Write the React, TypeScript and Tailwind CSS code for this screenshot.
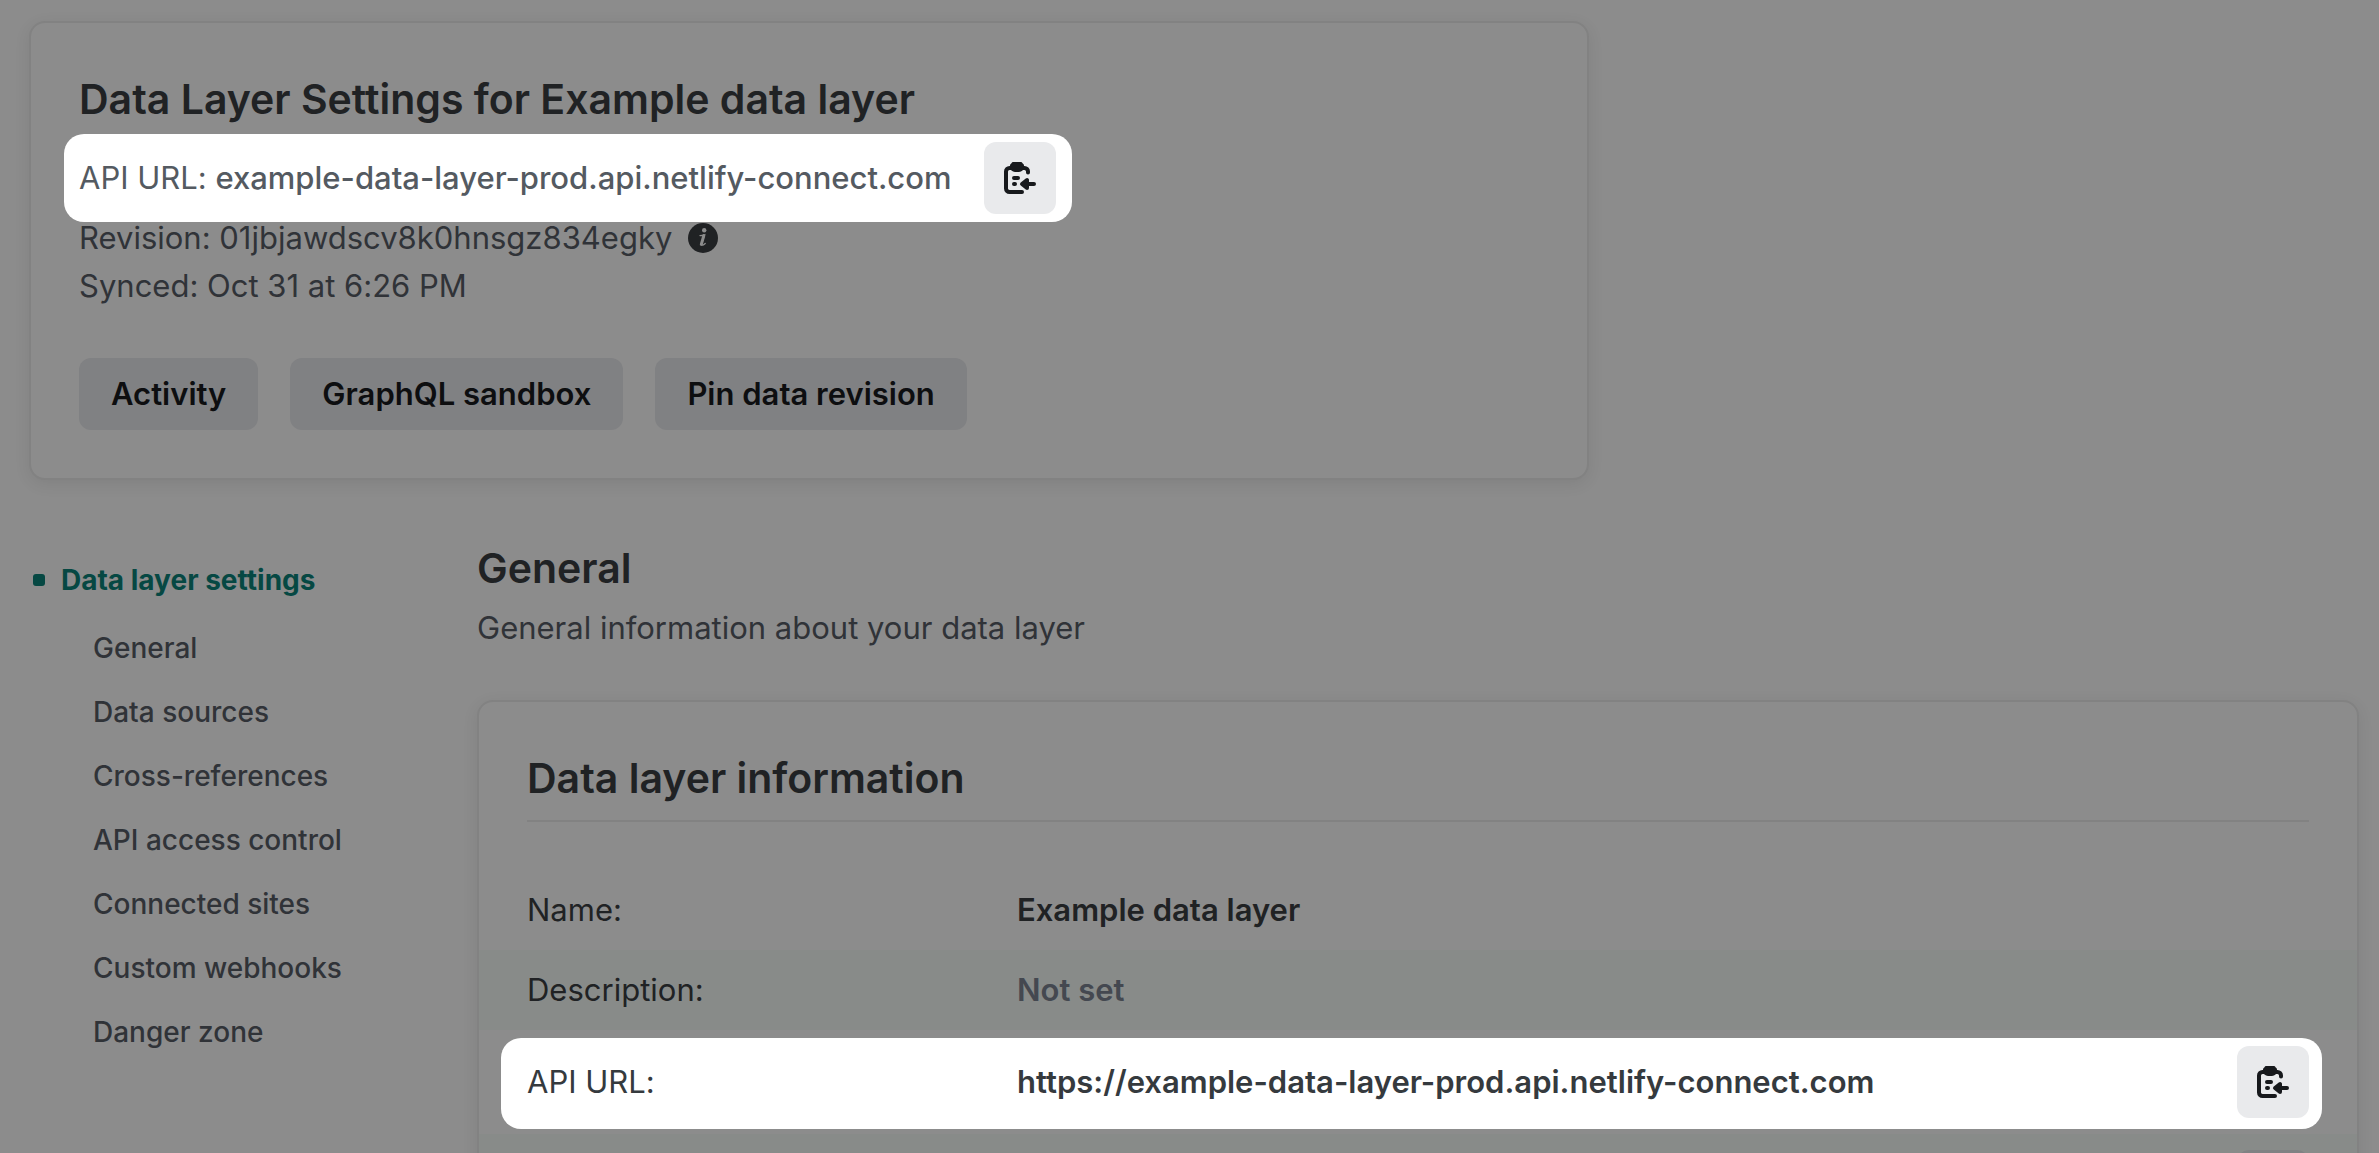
import type { ReactNode } from "react";

const navItems = [
  { label: "General", href: "#general" },
  { label: "Data sources", href: "#data-sources" },
  { label: "Cross-references", href: "#cross-references" },
  { label: "API access control", href: "#api-access-control" },
  { label: "Connected sites", href: "#connected-sites" },
  { label: "Custom webhooks", href: "#custom-webhooks" },
  { label: "Danger zone", href: "#danger-zone" },
];

const headerActions = ["Activity", "GraphQL sandbox", "Pin data revision"];

function CopyIcon() {
  return (
    <svg viewBox="0 0 32 32" className="size-8" fill="none" aria-hidden="true">
      <path
        d="M7 6H5.5A3.5 3.5 0 0 0 2 9.5v17A3.5 3.5 0 0 0 5.5 30H18M19 6h1.5A3.5 3.5 0 0 1 24 9.5V10.5"
        stroke="currentColor"
        strokeWidth="4"
        strokeLinecap="round"
      />
      <path
        d="M9.5 0h7a2 2 0 0 1 2 1.2A2.5 2.5 0 0 1 20 3.5V5a5 5 0 0 1-5 5h-4a5 5 0 0 1-5-5V3.5a2.5 2.5 0 0 1 1.5-2.3A2 2 0 0 1 9.5 0Z"
        fill="currentColor"
      />
      <path d="M10 16h4M10 22h1M23 22h7" stroke="currentColor" strokeWidth="4" strokeLinecap="round" />
      <path
        d="M18 22l5-4v8Z"
        fill="currentColor"
        stroke="currentColor"
        strokeWidth="4"
        strokeLinejoin="round"
      />
    </svg>
  );
}

function InfoIcon() {
  return (
    <svg viewBox="0 0 30 30" className="size-[30px]" fill="none" aria-hidden="true">
      <circle cx="15" cy="15" r="15" fill="#202224" />
      <circle cx="16.2" cy="7.3" r="2.2" fill="#8c8c8c" />
      <path
        d="M12 12.6c1.6 0 3.2-.3 4.6-.8l-3 9.2c-.4 1.5.9 1.8 3.6-.6"
        stroke="#8c8c8c"
        strokeWidth="1.4"
        strokeLinecap="round"
      />
      <path d="M15.8 12.6l-2.5 8.7" stroke="#8c8c8c" strokeWidth="3" strokeLinecap="round" />
    </svg>
  );
}

function CopyButton({ label, dimmed = false }: { label: string; dimmed?: boolean }) {
  return (
    <button
      type="button"
      aria-label={label}
      className={`flex size-[72px] shrink-0 items-center justify-center rounded-xl ${
        dimmed ? "bg-[#808183] text-[#0d0e10]" : "bg-[#e9eaec] text-[#17191c]"
      }`}
    >
      <CopyIcon />
    </button>
  );
}

function Card({ className = "", children }: { className?: string; children: ReactNode }) {
  return (
    <section
      className={`rounded-2xl border-2 border-[#828282] bg-[#8c8c8c] shadow-[0_4px_16px_rgba(0,0,0,0.08)] ${className}`}
    >
      {children}
    </section>
  );
}

export default function App() {
  return (
    <div className="h-screen overflow-hidden bg-[#8c8c8c] pt-[21px] pr-5 pl-[29px] font-['Inter','Liberation_Sans',sans-serif] text-[31px] leading-[48px] text-[#303338] [font-variant-ligatures:none]">
      <Card className="max-w-[1560px] px-12 py-12">
        <h1 className="text-[41px] leading-[56px] font-semibold text-[#202224]">
          Data Layer Settings for Example data layer
        </h1>

        <div className="-mx-[15px] mt-[7px] -mb-2 flex w-fit items-center gap-8 rounded-[20px] bg-white py-2 pr-4 pl-[15px] text-[#545a61]">
          <p>
            API URL: <span className="font-medium">example-data-layer-prod.api.netlify-connect.com</span>
          </p>
          <CopyButton label="Copy API URL" />
        </div>
        <p className="flex items-center gap-4">
          Revision: 01jbjawdscv8k0hnsgz834egky
          <InfoIcon />
        </p>
        <p>Synced: Oct 31 at 6:26 PM</p>

        <div className="mt-12 flex gap-8">
          {headerActions.map((action) => (
            <button
              key={action}
              type="button"
              className="h-[72px] rounded-xl bg-[#808183] px-8 font-semibold text-[#0d0e10]"
            >
              {action}
            </button>
          ))}
        </div>
      </Card>

      <div className="mt-[60px] flex">
        <nav aria-label="Data layer settings" className="w-[448px] shrink-0 pt-5 text-[28px]">
          <a href="#settings" className="flex items-center gap-4 pl-1 leading-10 font-bold text-[#064843]">
            <span className="size-3 rounded-[3px] bg-[#064843]" />
            Data layer settings
          </a>
          <ul className="mt-4 pl-16 font-medium">
            {navItems.map((item) => (
              <li key={item.href}>
                <a href={item.href} className="block leading-[64px]">
                  {item.label}
                </a>
              </li>
            ))}
          </ul>
        </nav>

        <main className="min-w-0 flex-1">
          <h2 className="text-[41px] leading-[56px] font-semibold text-[#202224]">General</h2>
          <p className="mt-2">General information about your data layer</p>

          <Card className="mt-12 pt-12">
            <h3 className="mx-12 border-b-2 border-[#828282] pb-3.5 text-[41px] leading-[56px] font-semibold text-[#202224]">
              Data layer information
            </h3>

            <table className="mt-12 w-full table-fixed text-left text-[#202224]">
              <tbody>
                <tr className="h-20">
                  <th scope="row" className="w-[538px] pl-12 font-normal">
                    Name:
                  </th>
                  <td className="font-semibold">Example data layer</td>
                  <td className="w-[120px]" />
                </tr>
                <tr className="h-20 bg-[#888b89]">
                  <th scope="row" className="pl-12 font-normal">
                    Description:
                  </th>
                  <td className="font-semibold text-[#444850]">Not set</td>
                  <td />
                </tr>
                <tr className="relative isolate h-[104px] text-[#353a3e]">
                  <th scope="row" className="pl-12 font-normal">
                    <span className="absolute top-2 right-[35px] bottom-[5px] left-[22px] -z-10 rounded-[20px] bg-white" />
                    API URL:
                  </th>
                  <td className="font-semibold">https://example-data-layer-prod.api.netlify-connect.com</td>
                  <td>
                    <CopyButton label="Copy full API URL" />
                  </td>
                </tr>
                <tr className="h-[104px] bg-[#888b89]">
                  <th scope="row" className="pl-12" />
                  <td />
                  <td>
                    <CopyButton label="Copy value" dimmed />
                  </td>
                </tr>
              </tbody>
            </table>
          </Card>
        </main>
      </div>
    </div>
  );
}
